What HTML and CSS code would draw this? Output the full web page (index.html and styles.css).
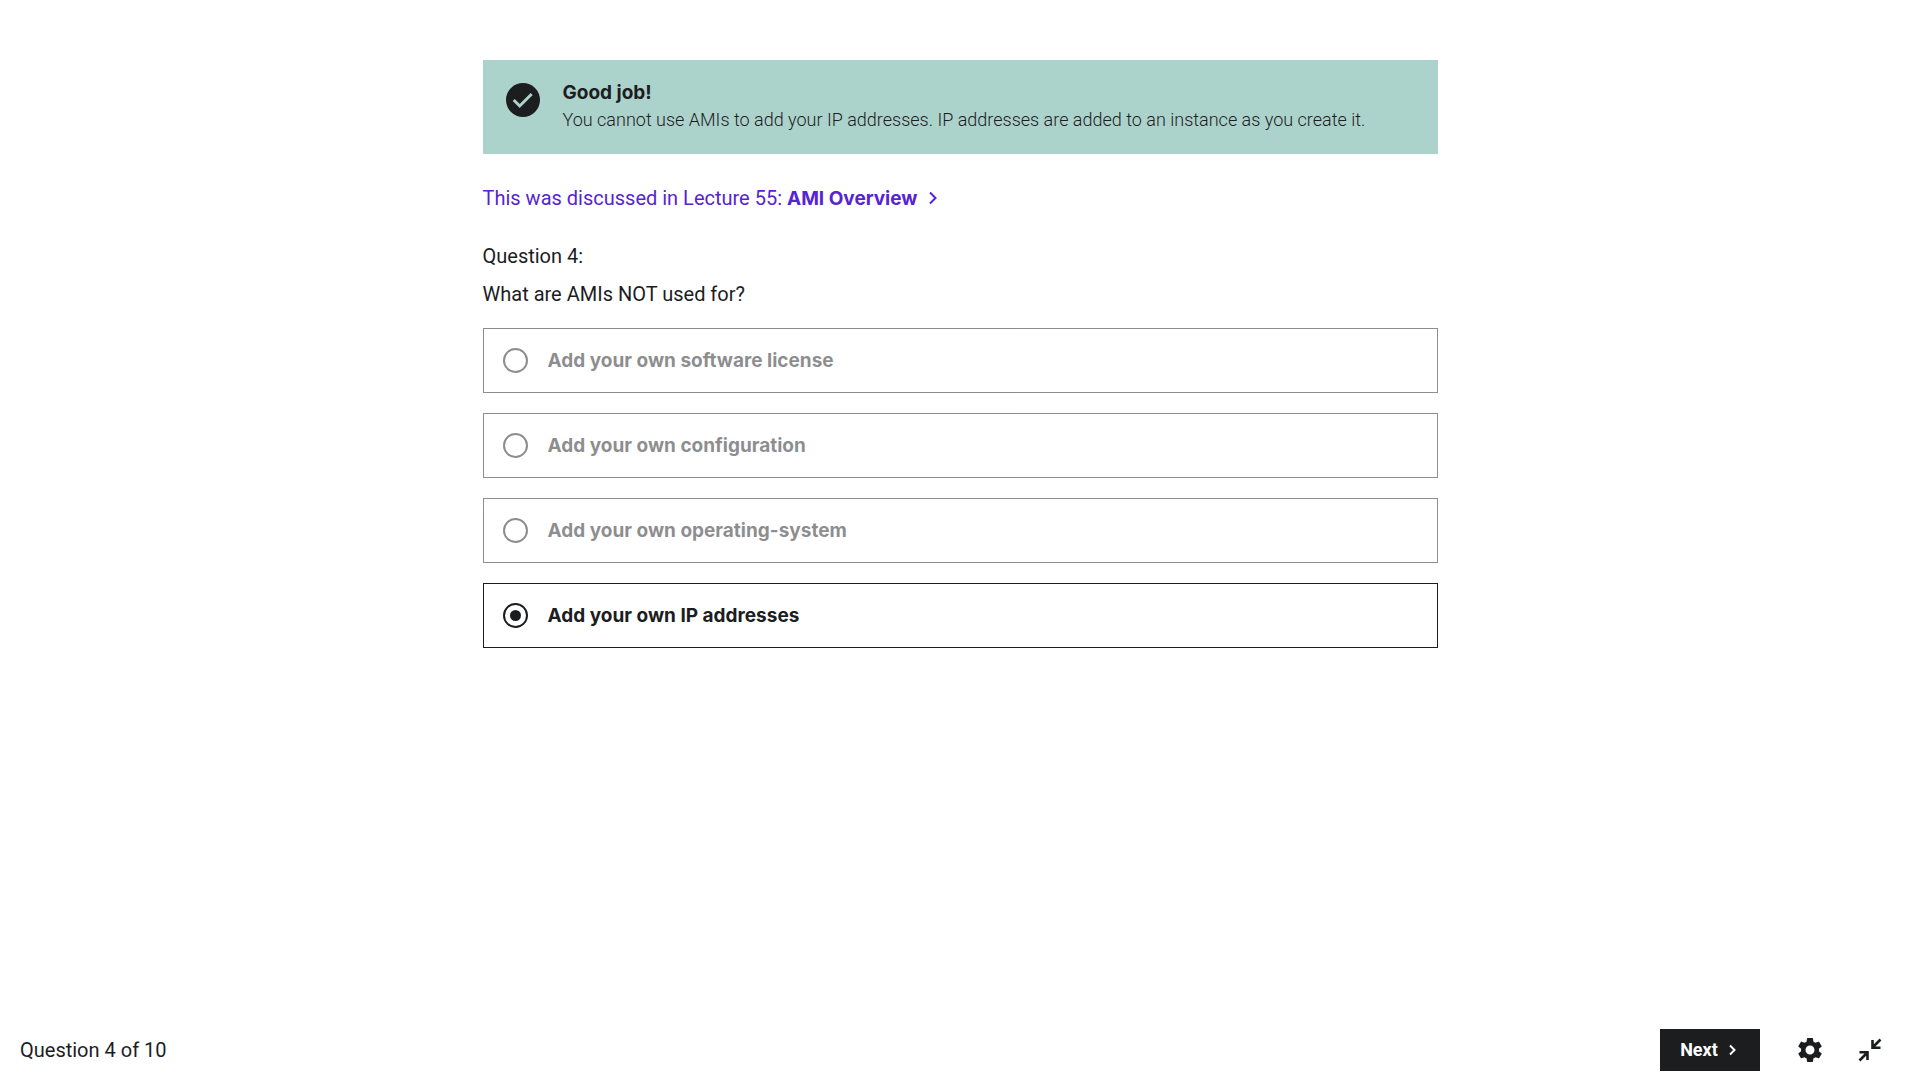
FILE: index.html
```html
<!DOCTYPE html>
<html lang="en">
<head>
<meta charset="utf-8">
<meta name="viewport" content="width=device-width, initial-scale=1">
<title>Quiz</title>
<link rel="stylesheet" href="styles.css">
</head>
<body>
<main class="quiz">
  <section class="alert" role="status">
    <svg class="alert-icon" viewBox="0 0 40 40" aria-hidden="true">
      <circle cx="20" cy="20" r="17" fill="currentColor"/>
      <path d="M10.7 20l6 6L28.700 14" fill="none" stroke="#acd2cc" stroke-width="3"/>
    </svg>
    <div>
      <h1 class="alert-title">Good job!</h1>
      <p class="alert-text">You cannot use AMIs to add your IP addresses. IP addresses are added to an instance as you create it.</p>
    </div>
  </section>

  <a class="lecture-link" href="#">
    <span>This was discussed in Lecture 55: <b>AMI Overview</b></span>
    <svg class="chevron" viewBox="0 0 16 16" aria-hidden="true"><path d="M5 2.500l5.500 5.500L5 13.500"/></svg>
  </a>

  <form>
    <fieldset class="question">
      <legend class="question-text">
        <span>Question 4:</span>
        <span>What are AMIs NOT used for?</span>
      </legend>
      <div class="options">
        <label class="option"><input type="radio" name="answer" disabled><span>Add your own software license</span></label>
        <label class="option"><input type="radio" name="answer" disabled><span>Add your own configuration</span></label>
        <label class="option"><input type="radio" name="answer" disabled><span>Add your own operating-system</span></label>
        <label class="option"><input type="radio" name="answer" checked><span>Add your own IP addresses</span></label>
      </div>
    </fieldset>
  </form>
</main>

<footer class="footer">
  <span class="progress">Question 4 of 10</span>
  <button class="next" type="button">Next
    <svg class="chevron" viewBox="0 0 16 16" aria-hidden="true"><path d="M6 3.500l4.500 4.500L6 12.500"/></svg>
  </button>
  <div class="tools">
    <button class="tool" type="button" aria-label="Settings">
      <svg viewBox="0 0 24 24" aria-hidden="true"><path fill="currentColor" d="M19.14 12.94c.04-.3.06-.61.06-.94 0-.32-.02-.64-.07-.94l2.03-1.58a.49.49 0 0 0 .12-.61l-1.92-3.32a.488.488 0 0 0-.59-.22l-2.39.96c-.5-.38-1.03-.7-1.62-.94l-.36-2.54a.484.484 0 0 0-.48-.41h-3.84c-.24 0-.43.17-.47.41l-.36 2.54c-.59.24-1.13.57-1.62.94l-2.39-.96c-.22-.08-.47 0-.59.22L2.74 8.87c-.12.21-.08.47.12.61l2.03 1.58c-.05.3-.09.63-.09.94s.02.64.07.94l-2.03 1.58a.49.49 0 0 0-.12.61l1.92 3.32c.12.22.37.29.59.22l2.39-.96c.5.38 1.03.7 1.62.94l.36 2.54c.05.24.24.41.48.41h3.84c.24 0 .44-.17.47-.41l.36-2.54c.59-.24 1.13-.56 1.62-.94l2.39.96c.22.08.47 0 .59-.22l1.92-3.32c.12-.22.07-.47-.12-.61l-2.01-1.58zM12 15.6A3.6 3.6 0 1 1 12 8.4a3.6 3.6 0 0 1 0 7.2z"/></svg>
    </button>
    <button class="tool" type="button" aria-label="Exit expanded view">
      <svg viewBox="0 0 30 30" aria-hidden="true"><path fill="none" stroke="currentColor" stroke-width="2.6" d="M25.5 4.5l-8 8M17.5 5v7.7h8M4.5 25.5l8-8M4.5 17.3h8V25"/></svg>
    </button>
  </div>
</footer>
</body>
</html>
```
FILE: styles.css
```css
* { box-sizing: border-box; }

body {
  margin: 0;
  min-height: 100vh;
  display: flex;
  flex-direction: column;
  background: #fff;
  color: #1c1d1f;
  font: 20px/28px Roboto, "Liberation Sans", sans-serif;
}

h1, p, fieldset, legend { margin: 0; padding: 0; border: 0; }

svg { display: block; flex: none; }

.quiz {
  flex: 1;
  width: 100%;
  max-width: 955px;
  margin: 0 auto;
  padding: 60px 0;
}

.alert {
  display: flex;
  gap: 20px;
  padding: 20px;
  background: #acd2cc;
}

.alert-icon { width: 40px; height: 40px; }

.alert-title { font: 700 19px/26px Inter, sans-serif; }

.alert-text { font: 300 18px/28px Roboto, sans-serif; }

.lecture-link {
  display: flex;
  align-items: center;
  gap: 8px;
  margin: 30px 0;
  color: #5624d0;
  text-decoration: none;
}

.lecture-link b { font: 700 19px/20px Inter, sans-serif; }

.chevron {
  width: 16px;
  height: 16px;
  fill: none;
  stroke: currentColor;
  stroke-width: 2;
}

.question-text {
  display: flex;
  flex-direction: column;
  gap: 10px;
  margin-bottom: 20px;
}

.options { display: grid; gap: 20px; }

.option {
  display: flex;
  align-items: center;
  gap: 20px;
  padding: 19px;
  border: 1px solid #1c1d1f;
  font: 700 19px/25px Inter, sans-serif;
}

.option:has(:disabled) { opacity: 0.5; }

.option input {
  appearance: none;
  flex: none;
  display: grid;
  place-items: center;
  width: 25px;
  height: 25px;
  margin: 0;
  border: 2px solid #1c1d1f;
  border-radius: 50%;
}

.option input:checked::before {
  content: "";
  width: 11px;
  height: 11px;
  border-radius: 50%;
  background: #1c1d1f;
}

.footer {
  display: flex;
  align-items: center;
  gap: 20px;
  min-height: 60px;
  padding: 0 20px;
}

.progress { margin-right: auto; }

button {
  display: flex;
  align-items: center;
  justify-content: center;
  padding: 0;
  border: 0;
  color: #1c1d1f;
  background: none;
}

.next {
  gap: 6px;
  width: 100px;
  height: 42px;
  color: #fff;
  background: #1c1d1f;
  font: 700 18px/24px Roboto, sans-serif;
}

.tools { display: flex; }

.tool { width: 60px; height: 60px; }

.tool svg { width: 30px; height: 30px; }
```
